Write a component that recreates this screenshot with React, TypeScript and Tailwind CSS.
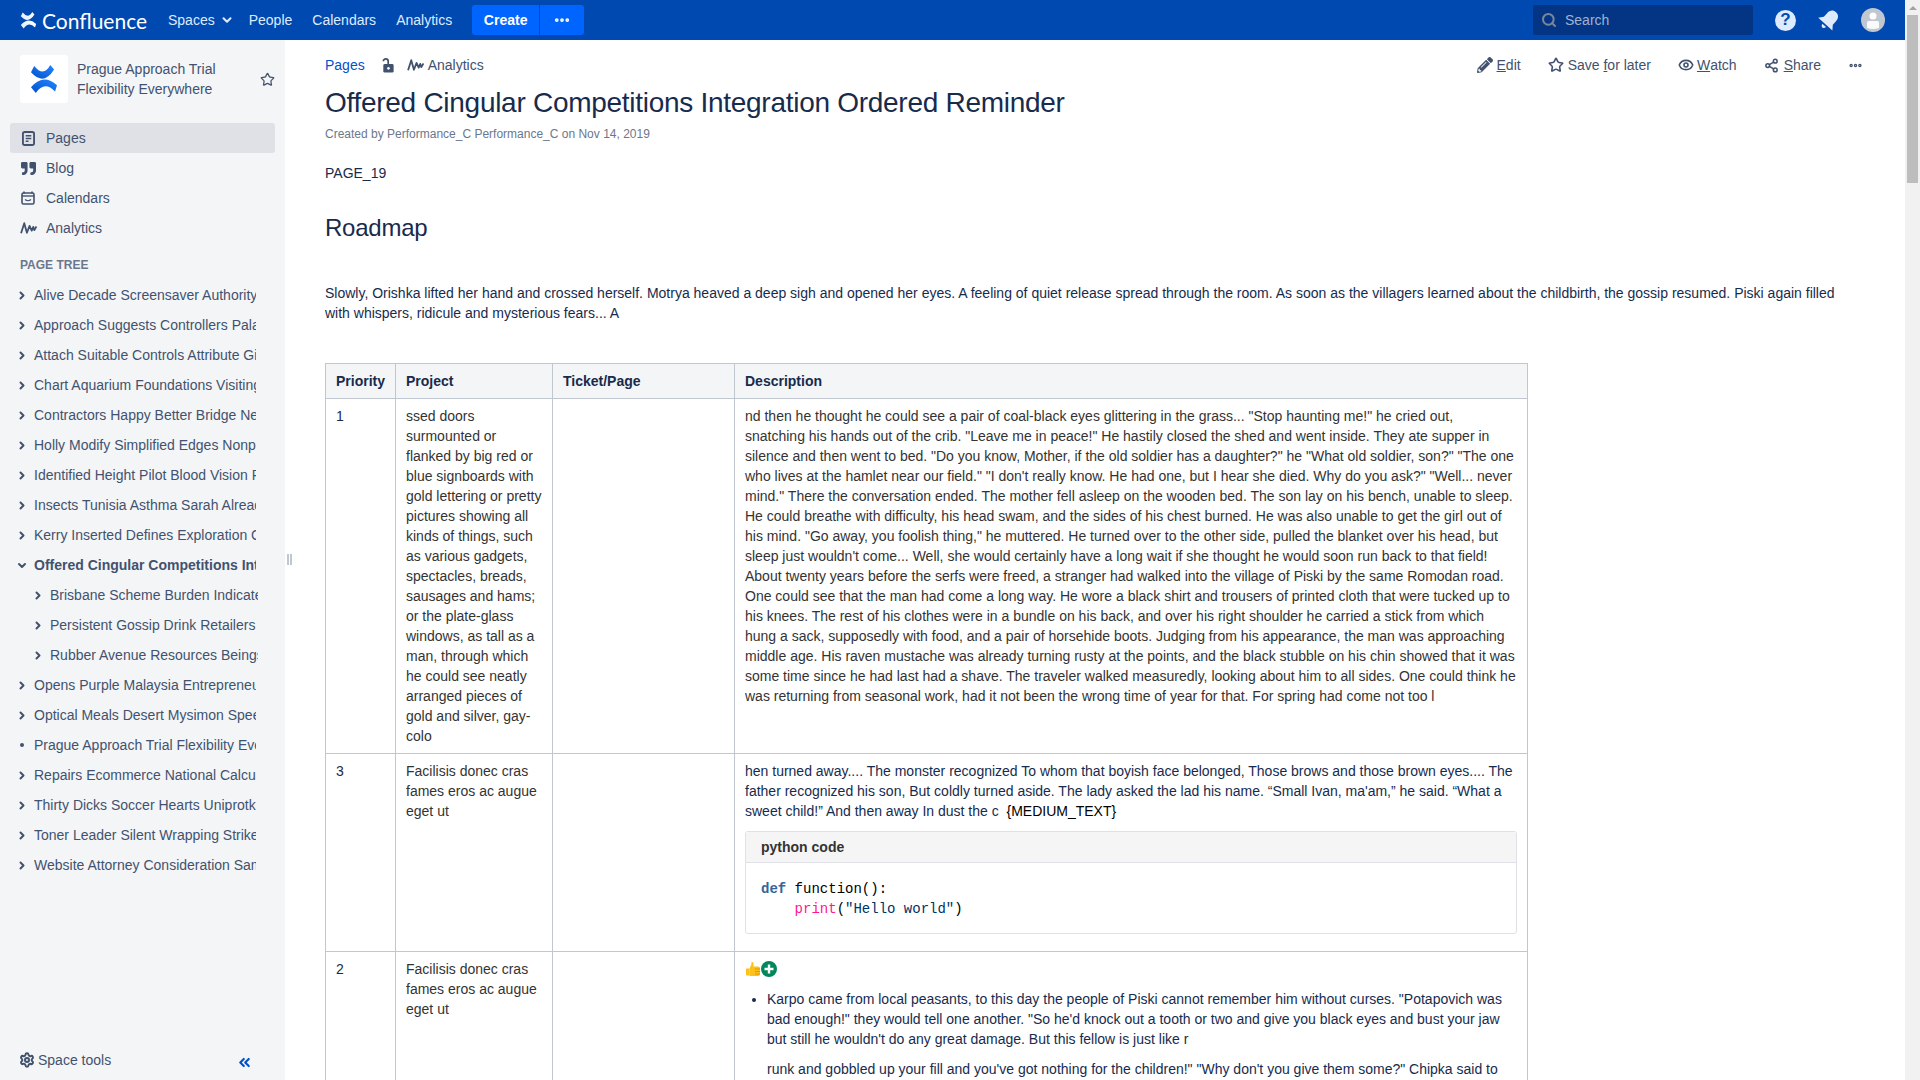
import React from 'react';
import { ChevronDown, ChevronRight, ChevronsLeft, Ellipsis, Eye, Search, Settings, Share2, Star } from 'lucide-react';
import { FaPencilAlt, FaQuoteRight } from 'react-icons/fa';

const TREE = [
  { title: 'Alive Decade Screensaver Authority Sample', kind: 'closed' },
  { title: 'Approach Suggests Controllers Palace Ranges', kind: 'closed' },
  { title: 'Attach Suitable Controls Attribute Gifts Rooms', kind: 'closed' },
  { title: 'Chart Aquarium Foundations Visiting Papers', kind: 'closed' },
  { title: 'Contractors Happy Better Bridge Nearly Shown', kind: 'closed' },
  { title: 'Holly Modify Simplified Edges Nonprofit Coast', kind: 'closed' },
  { title: 'Identified Height Pilot Blood Vision Player', kind: 'closed' },
  { title: 'Insects Tunisia Asthma Sarah Already Lines', kind: 'closed' },
  { title: 'Kerry Inserted Defines Exploration Guard', kind: 'closed' },
  { title: 'Offered Cingular Competitions Integration Ordered Reminder', kind: 'open' },
  { title: 'Brisbane Scheme Burden Indicated Stream', kind: 'child' },
  { title: 'Persistent Gossip Drink Retailers Shared', kind: 'child' },
  { title: 'Rubber Avenue Resources Beings Travel', kind: 'child' },
  { title: 'Opens Purple Malaysia Entrepreneurs Fixed', kind: 'closed' },
  { title: 'Optical Meals Desert Mysimon Speeches', kind: 'closed' },
  { title: 'Prague Approach Trial Flexibility Everywhere', kind: 'leaf' },
  { title: 'Repairs Ecommerce National Calculator Tips', kind: 'closed' },
  { title: 'Thirty Dicks Soccer Hearts Uniprotkb Areas', kind: 'closed' },
  { title: 'Toner Leader Silent Wrapping Strikes Cycle', kind: 'closed' },
  { title: 'Website Attorney Consideration Sample Press', kind: 'closed' },
];

function LogoMark({ className, from, to }: { className: string; from: string; to: string }) {
  const id = `logo-${from.slice(1)}`;
  return (
    <svg viewBox="0 0 27 30" className={className}>
      <defs>
        <linearGradient id={id} x1="0" y1="1" x2="1" y2="0">
          <stop offset="0" stopColor={from} />
          <stop offset="1" stopColor={to} />
        </linearGradient>
      </defs>
      <path fill={`url(#${id})`} d="M3.3 1 L0 7.6 Q13 22 24 4.5 L20 0 Q13 13 3.3 1Z" />
      <path fill={`url(#${id})`} d="M0 23 Q13 8 27 21 L25 27.5 Q14 16 5 29Z" />
    </svg>
  );
}

function PagesIcon() {
  return (
    <svg viewBox="0 0 14 16" className="w-[13px] h-[15px]" fill="none">
      <rect x="1" y="1" width="12" height="14" rx="2" stroke="#42526e" strokeWidth="2" />
      <path d="M4 5h6M4 8h6M4 11h3" stroke="#42526e" strokeWidth="1.5" />
    </svg>
  );
}

function CalendarIcon() {
  return (
    <svg viewBox="0 0 14 14" className="w-[14px] h-[14px]" fill="none">
      <path d="M3 0.5v2M11 0.5v2" stroke="#42526e" strokeWidth="1.6" />
      <rect x="1" y="2" width="12" height="11" rx="1.5" stroke="#42526e" strokeWidth="1.6" />
      <path d="M1 5h12" stroke="#42526e" strokeWidth="1.4" />
      <path d="M4 8.5q3 2.5 6 0" stroke="#42526e" strokeWidth="1.2" />
    </svg>
  );
}

function AnalyticsIcon() {
  return (
    <svg viewBox="0 0 16 12" className="w-[17px] h-[14px] shrink-0" fill="none">
      <path d="M1 11 L4 1.5 L6.5 10.5 L9 4 L11 8.5 L12.5 5 L13.5 8 L15.5 4.5" stroke="#42526e" strokeWidth="1.7" strokeLinejoin="round" />
    </svg>
  );
}

function LockOpenIcon() {
  return (
    <svg viewBox="0 0 14 16" className="w-[14px] h-[15px]" fill="none">
      <path d="M2 3.5 A2.6 2.6 0 0 1 7.2 3.5 V7" stroke="#42526e" strokeWidth="1.8" />
      <rect x="2" y="6.5" width="11" height="9" rx="1.5" fill="#42526e" />
      <circle cx="7.5" cy="11" r="1.4" fill="#ffffff" />
    </svg>
  );
}

function BellIcon() {
  return (
    <svg viewBox="0 0 24 24" className="w-[24px] h-[24px]">
      <g transform="rotate(42 12 12)" fill="#deebff">
        <path d="M12 1.5 C8 1.5 6 4.5 6 8.5 V13 L2.5 17.5 H21.5 L18 13 V8.5 C18 4.5 16 1.5 12 1.5Z" />
        <path d="M9.5 19.2 H14.5 Q14 22 12 22 Q10 22 9.5 19.2Z" />
      </g>
    </svg>
  );
}

function AvatarIcon() {
  return (
    <svg viewBox="0 0 24 24" className="w-[24px] h-[24px]">
      <circle cx="12" cy="12" r="12" fill="#c1c7d0" />
      <circle cx="12" cy="8" r="3.5" fill="#ffffff" />
      <path fill="#ffffff" d="M6 14.5 Q6 13 7.5 13 H16.5 Q18 13 18 14.5 V20 Q15 21 12 21 Q9 21 6 20Z" opacity="0.9" />
    </svg>
  );
}

function Reactions() {
  return (
    <div className="flex items-center h-5">
      <svg viewBox="0 0 16 16" className="w-4 h-4">
        <path fill="#fcc21b" d="M1 7.5h3.5v7H2q-1 0-1-1z" />
        <path fill="#fcc21b" d="M4.5 7.5 L6.5 3 V1 Q8.5 0.5 8.5 3 V5.5 H13 Q15 5.5 15 7 V13 Q15 15 13 15 H4.5Z" />
        <path d="M10 8h5M10 10.5h5M10 13h5" stroke="#e59600" strokeWidth="1" />
      </svg>
      <svg viewBox="0 0 16 16" className="w-4 h-4">
        <circle cx="8" cy="8" r="8" fill="#00875a" />
        <path d="M8 3.5v9M3.5 8h9" stroke="#ffffff" strokeWidth="2.4" />
      </svg>
    </div>
  );
}

function TreeRow({ title, kind }: { title: string; kind: string }) {
  const isChild = kind === 'child';
  return (
    <div className={`flex items-center h-[30px] ${isChild ? 'pl-[32px]' : 'pl-[16px]'}`}>
      <span className="w-[12px] flex justify-center text-[#42526e]">
        {kind === 'open' ? (
          <ChevronDown size={13} strokeWidth={4} />
        ) : kind === 'leaf' ? (
          <span className="w-[4px] h-[4px] rounded-full bg-[#42526e]" />
        ) : (
          <ChevronRight size={13} strokeWidth={4} />
        )}
      </span>
      <span
        className={`ml-[6px] overflow-hidden whitespace-nowrap text-[#42526e] ${isChild ? 'w-[208px]' : 'w-[222px]'} ${kind === 'open' ? 'font-bold' : ''}`}
      >
        {title}
      </span>
    </div>
  );
}

function Header() {
  return (
    <header className="h-10 shrink-0 bg-[#0049b0] flex items-center text-[#deebff]">
      <div className="flex items-center pl-5 w-[158px]">
        <LogoMark className="w-[17px] h-[17px]" from="#deebff" to="#ffffff" />
        <span className="ml-[5px] text-[21px] leading-none text-white font-['Lato',sans-serif]">Confluence</span>
      </div>
      <nav className="flex items-center">
        <span className="flex items-center pl-[10px] pr-[5px]">
          Spaces
          <ChevronDown size={14} strokeWidth={3.5} className="ml-[5px]" />
        </span>
        <span className="px-[10px]">People</span>
        <span className="px-[10px]">Calendars</span>
        <span className="px-[10px]">Analytics</span>
      </nav>
      <div className="flex items-center ml-[10px] h-[30px]">
        <span className="h-full w-[67px] flex items-center justify-center bg-[#0065ff] rounded-l-[3px] font-bold text-white">Create</span>
        <span className="h-full w-[44px] ml-px flex items-center justify-center bg-[#0065ff] rounded-r-[3px] text-white">
          <Ellipsis size={18} strokeWidth={3} />
        </span>
      </div>
      <div className="ml-auto flex items-center">
        <div className="w-[220px] h-[30px] rounded-[3px] bg-[#043584] flex items-center pl-[8px] text-[#9fb2d4]">
          <Search size={16} strokeWidth={3} className="text-[#7a869a]" />
          <span className="ml-[8px]">Search</span>
        </div>
        <div className="w-[21px] h-[21px] ml-[22px] rounded-full bg-[#deebff] flex items-center justify-center text-[#0049b0] font-bold text-[17px]">?</div>
        <div className="ml-[21px]"><BellIcon /></div>
        <div className="ml-[20px] mr-5"><AvatarIcon /></div>
      </div>
    </header>
  );
}

function NavItem({ icon, label, active }: { icon: React.ReactNode; label: string; active?: boolean }) {
  return (
    <div className={`flex items-center h-[30px] rounded-[3px] text-[#42526e] ${active ? 'bg-[#dfe1e6]' : ''}`}>
      <span className="w-[36px] pl-[10px] flex justify-start items-center">
        <span className="w-[16px] flex justify-center">{icon}</span>
      </span>
      {label}
    </div>
  );
}

function Sidebar() {
  return (
    <aside className="relative w-[285px] shrink-0 bg-[#f4f5f7] flex flex-col">
      <div className="flex items-center mt-[15px] ml-5">
        <div className="w-12 h-12 bg-white rounded-[3px] flex items-center justify-center">
          <LogoMark className="w-[26px] h-[29px]" from="#0052cc" to="#2684ff" />
        </div>
        <div className="ml-[9px] w-[170px] text-[#42526e] leading-5">Prague Approach Trial Flexibility Everywhere</div>
        <Star size={15} strokeWidth={2} className="ml-[13px] text-[#42526e]" />
      </div>
      <div className="mt-5 ml-[10px] w-[265px]">
        <NavItem icon={<PagesIcon />} label="Pages" active />
        <NavItem icon={<FaQuoteRight size={15} color="#42526e" />} label="Blog" />
        <NavItem icon={<CalendarIcon />} label="Calendars" />
        <NavItem icon={<AnalyticsIcon />} label="Analytics" />
      </div>
      <div className="h-[37px] flex items-end pl-5 pb-[7px] text-[12px] leading-4 font-semibold text-[#6b778c]">PAGE TREE</div>
      <div>
        {TREE.map((row) => (
          <TreeRow key={row.title} title={row.title} kind={row.kind} />
        ))}
      </div>
      <div className="mt-auto h-10 flex items-center pl-[19px] text-[#42526e]">
        <Settings size={16} strokeWidth={3} />
        <span className="ml-[3px]">Space tools</span>
        <ChevronsLeft size={17} strokeWidth={3} className="ml-auto mr-[32px] mt-[4px] text-[#0052cc]" />
      </div>
      <div className="absolute left-[287px] top-[514px] w-[5px] h-[11px] border-x-2 border-[#c1c7d0]" />
    </aside>
  );
}

function Toolbar() {
  return (
    <div className="flex items-center h-5 mt-[15px]">
      <span className="text-[#0052cc]">Pages</span>
      <span className="ml-[16px]"><LockOpenIcon /></span>
      <span className="ml-[12px] flex items-center text-[#42526e]">
        <AnalyticsIcon />
        <span className="ml-[4px]">Analytics</span>
      </span>
      <div className="ml-auto flex items-center gap-[27px] text-[#42526e]">
        <span className="flex items-center"><FaPencilAlt size={16} className="mr-[4px]" /><u>E</u>dit</span>
        <span className="flex items-center"><Star size={16} strokeWidth={2.4} className="mr-[4px]" />Save&nbsp;<u>f</u>or later</span>
        <span className="flex items-center"><Eye size={16} strokeWidth={2.4} className="mr-[3px]" /><u>W</u>atch</span>
        <span className="flex items-center"><Share2 size={15} strokeWidth={2.4} className="mr-[5px]" /><u>S</u>hare</span>
        <Ellipsis size={15} strokeWidth={3.5} />
      </div>
    </div>
  );
}

const cell = 'border border-[#c1c7d0] px-[10px] py-[7px] align-top';
const head = 'border border-[#c1c7d0] px-[10px] py-[7px] text-left font-bold bg-[#f4f5f7] text-[#172b4d]';

function ContentTable() {
  return (
    <table className="table-fixed border-collapse w-[1202px] mt-10">
      <colgroup>
        <col className="w-[70px]" />
        <col className="w-[157px]" />
        <col className="w-[182px]" />
        <col className="w-[793px]" />
      </colgroup>
      <thead>
        <tr>
          <th className={head}>Priority</th>
          <th className={head}>Project</th>
          <th className={head}>Ticket/Page</th>
          <th className={head}>Description</th>
        </tr>
      </thead>
      <tbody>
        <tr>
          <td className={`${cell} text-[#172b4d]`}>1</td>
          <td className={`${cell} text-[#333333]`}>
            ssed doors surmounted or flanked by big red or blue signboards with gold lettering or pretty pictures showing all kinds of things, such as various gadgets, spectacles, breads, sausages and hams; or the plate-glass windows, as tall as a man, through which he could see neatly arranged pieces of gold and silver, gay-colo
          </td>
          <td className={cell} />
          <td className={`${cell} !pr-[12px] text-[#333333]`}>
            nd then he thought he could see a pair of coal-black eyes glittering in the grass... "Stop haunting me!" he cried out, snatching his hands out of the crib. "Leave me in peace!" He hastily closed the shed and went inside. They ate supper in silence and then went to bed. "Do you know, Mother, if the old soldier has a daughter?" he "What old soldier, son?" "The one who lives at the hamlet near our field." "I don't really know. He had one, but I hear she died. Why do you ask?" "Well... never mind." There the conversation ended. The mother fell asleep on the wooden bed. The son lay on his bench, unable to sleep. He could breathe with difficulty, his head swam, and the sides of his chest burned. He was also unable to get the girl out of his mind. "Go away, you foolish thing," he muttered. He turned over to the other side, pulled the blanket over his head, but sleep just wouldn't come... Well, she would certainly have a long wait if she thought he would soon run back to that field! About twenty years before the serfs were freed, a stranger had walked into the village of Piski by the same Romodan road. One could see that the man had come a long way. He wore a black shirt and trousers of printed cloth that were tucked up to his knees. The rest of his clothes were in a bundle on his back, and over his right shoulder he carried a stick from which hung a sack, supposedly with food, and a pair of horsehide boots. Judging from his appearance, the man was approaching middle age. His raven mustache was already turning rusty at the points, and the black stubble on his chin showed that it was <span className="whitespace-nowrap">some time since he had last had a shave. The traveler walked measuredly, looking about him to all sides. One could think he</span><br />was returning from seasonal work, had it not been the wrong time of year for that. For spring had come not too l
          </td>
        </tr>
        <tr>
          <td className={`${cell} text-[#172b4d]`}>3</td>
          <td className={`${cell} text-[#333333]`}>Facilisis donec cras fames eros ac augue eget ut</td>
          <td className={cell} />
          <td className={cell}>
            <p className="text-[#172b4d]">
              hen turned away.... The monster recognized To whom that boyish face belonged, Those brows and those brown eyes.... The father recognized his son, But coldly turned aside. The lady asked the lad his name. “Small Ivan, ma'am,” he said. “What a sweet child!” And then away In dust the c&nbsp;&nbsp;<span className="text-[#000000]">{'{MEDIUM_TEXT}'}</span>
            </p>
            <div className="mt-[10px] mb-[10px] border border-[#dfe1e6] rounded-[3px]">
              <div className="h-[31px] px-[15px] flex items-center bg-[#f5f5f5] border-b border-[#dfe1e6] font-bold text-[#333333]">python code</div>
              <pre className="px-[15px] pt-[16px] pb-[14px] text-[14px] leading-5 font-['Liberation_Mono',monospace] text-[#000000]">
                <span className="font-bold text-[#336699]">def</span> function():{'\n'}    <span className="text-[#ff1493]">print</span>(<span className="text-[#003366]">"Hello world"</span>)
              </pre>
            </div>
          </td>
        </tr>
        <tr>
          <td className={`${cell} text-[#172b4d]`}>2</td>
          <td className={`${cell} text-[#333333]`}>Facilisis donec cras fames eros ac augue eget ut</td>
          <td className={cell} />
          <td className={`${cell} text-[#172b4d]`}>
            <Reactions />
            <ul className="mt-[10px] pl-[22px] list-disc">
              <li>
                <p>Karpo came from local peasants, to this day the people of Piski cannot remember him without curses. "Potapovich was bad enough!" they would tell one another. "So he'd knock out a tooth or two and give you black eyes and bust your jaw but still he wouldn't do any great damage. But this fellow is just like r</p>
                <p className="mt-[10px]">runk and gobbled up your fill and you've got nothing for the children!" "Why don't you give them some?" Chipka said to</p>
              </li>
            </ul>
          </td>
        </tr>
      </tbody>
    </table>
  );
}

function Scrollbar() {
  return (
    <div className="w-[15px] shrink-0 bg-[#f1f1f1] flex flex-col items-center">
      <div className="h-[15px] flex items-center justify-center">
        <span className="w-0 h-0 border-x-[4px] border-x-transparent border-b-[4px] border-b-[#a3a3a3]" />
      </div>
      <div className="w-[11px] h-[168px] bg-[#bdbdbd]" />
    </div>
  );
}

export default function App() {
  return (
    <div className="h-screen flex overflow-hidden bg-white text-[14px] leading-5 font-['Liberation_Sans',Arial,sans-serif]">
      <div className="flex-1 min-w-0 flex flex-col">
        <Header />
        <div className="flex-1 min-h-0 flex">
          <Sidebar />
          <main className="flex-1 min-w-0 overflow-hidden pl-10 pr-[42px]">
            <Toolbar />
            <h1 className="mt-[12px] text-[28px] leading-8 tracking-[-0.01em] text-[#172b4d]">Offered Cingular Competitions Integration Ordered Reminder</h1>
            <div className="mt-[7px] text-[12px] leading-4 text-[#6b778c]">Created by Performance_C Performance_C on Nov 14, 2019</div>
            <p className="mt-[21px] text-[#172b4d]">PAGE_19</p>
            <h2 className="mt-[30px] text-[24px] leading-[30px] tracking-[-0.01em] text-[#172b4d]">Roadmap</h2>
            <p className="mt-[40px] text-[#172b4d]">
              Slowly, Orishka lifted her hand and crossed herself. Motrya heaved a deep sigh and opened her eyes. A feeling of quiet release spread through the room. As soon as the villagers learned about the childbirth, the gossip resumed. Piski again filled with whispers, ridicule and mysterious fears... A
            </p>
            <ContentTable />
          </main>
        </div>
      </div>
      <Scrollbar />
    </div>
  );
}
